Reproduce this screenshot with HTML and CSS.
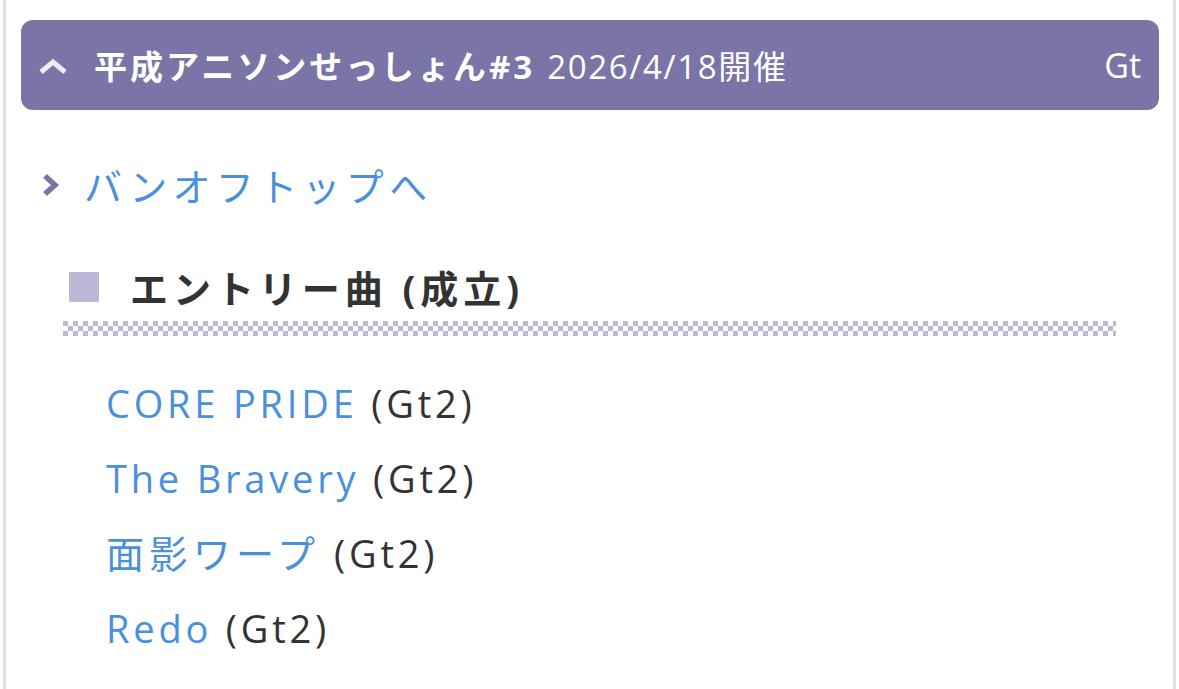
FILE: index.html
```html
<!DOCTYPE html>
<html lang="ja">
<head>
  <meta charset="utf-8">
  <title>平成アニソンせっしょん#3</title>
  <link rel="stylesheet" href="styles.css">
</head>
<body>
<div class="Page">

  <div class="EventHead">
    <svg class="EventHead-toggle" viewBox="0 0 30 16" width="30" height="16">
      <path d="M3 14 L15 4 L27 14" fill="none" stroke="#eeedf6" stroke-width="5"/>
    </svg>
    <span class="EventHead-title">平成アニソンせっしょん#3</span>
    <span class="EventHead-date">2026/4/18開催</span>
    <span class="EventHead-part">Gt</span>
  </div>

  <a class="BackLink" href="#">
    <svg class="BackLink-icon" viewBox="0 0 20 24" width="20" height="24">
      <path d="M4 3 L14 12 L4 21" fill="none" stroke="#7a75a8" stroke-width="5.5"/>
    </svg>
    バンオフトップへ
  </a>

  <h2 class="SectionTitle">
    <span class="SectionTitle-mark"></span>
    エントリー曲 (成立)
  </h2>

  <ul class="EntryList">
    <li><a href="#">CORE PRIDE</a> (Gt2)</li>
    <li><a href="#">The Bravery</a> (Gt2)</li>
    <li><a class="is-wide" href="#">面影ワープ</a> (Gt2)</li>
    <li><a href="#">Redo</a> (Gt2)</li>
  </ul>

</div>
</body>
</html>
```

FILE: styles.css
```css
body {
  margin: 0;
  background: #fff;
  color: #333;
  font-family: "Open Sans", "Noto Sans CJK JP", sans-serif;
}
.Page {
  box-sizing: border-box;
  min-height: 689px;
  margin: 0 3px;
  padding: 20px 14px 0 15px;
  border-left: 3px solid #e2e2e2;
  border-right: 3px solid #e2e2e2;
}
.EventHead {
  display: flex;
  align-items: center;
  height: 90px;
  padding: 0 18px 0 17px;
  border-radius: 12px;
  background-color: #7a75a6;
  color: #fff;
  font-size: 33px;
}
.EventHead-toggle {
  margin-right: 26px;
  margin-top: 1px;
}
.EventHead-title {
  font-weight: bold;
  letter-spacing: 0.09em;
  margin-right: 12px;
}
.EventHead-date {
  letter-spacing: 0.05em;
}
.EventHead-part {
  margin-left: auto;
  font-size: 34px;
}
.BackLink {
  display: flex;
  align-items: center;
  margin: 47px 0 0 20px;
  color: #4a90dc;
  font-size: 38px;
  letter-spacing: 0.14em;
  text-decoration: none;
}
.BackLink-icon {
  margin-right: 23px;
}
.SectionTitle {
  position: relative;
  z-index: 0;
  display: flex;
  align-items: center;
  margin: 47px 43px 0 42px;
  padding-bottom: 22px;
  background: repeating-conic-gradient(#bcb9d8 0 25%, #fff 0 50%) left bottom / 10px 10px;
  font-size: 38px;
  font-weight: bold;
  letter-spacing: 0.13em;
  color: #333;
}
/* white cover keeps the checker strip to the last 15px */
.SectionTitle::before {
  content: "";
  position: absolute;
  left: 0;
  right: 0;
  top: 0;
  bottom: 15px;
  background: #fff;
  z-index: -1;
}
.SectionTitle-mark {
  flex: none;
  width: 30px;
  height: 30px;
  margin: 0 31px 0 6px;
  background-color: #bcb9d8;
}
.EntryList {
  list-style: none;
  margin: 30px 0 0;
  padding: 0 0 0 85px;
  font-size: 38px;
  letter-spacing: 0.1em;
}
.EntryList li {
  line-height: 75px;
}
.EntryList a {
  color: #4a90dc;
  text-decoration: none;
}
.EntryList a.is-wide {
  letter-spacing: 0.14em;
}
```
